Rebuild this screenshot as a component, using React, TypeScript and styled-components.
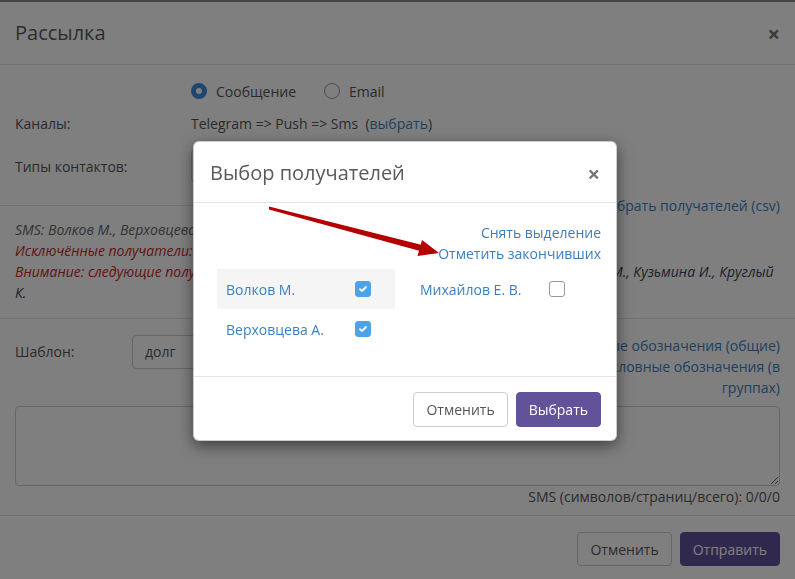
import React from "react";
import styled, { createGlobalStyle } from "styled-components";

const GlobalStyle = createGlobalStyle`
  html, body { margin: 0; padding: 0; }
  body {
    font-family: "Open Sans", "Liberation Sans", sans-serif;
    font-size: 14px;
    color: #555;
    background: #fff;
    overflow: hidden;
  }
  * { box-sizing: border-box; }
`;

const Page = styled.div`
  width: 795px;
  height: 579px;
  border-top: 2px solid #888;
  background: #fff;
  display: flex;
  flex-direction: column;
`;

const Header = styled.div`
  display: flex;
  align-items: center;
  justify-content: space-between;
  padding: 18px 15px;
  border-bottom: 1px solid #e5e5e5;
`;

const Title = styled.h4`
  margin: 0;
  font-weight: 400;
  font-size: 20px;
  line-height: 26px;
  color: #5a5a5a;
`;

const Close = styled.span`
  font-size: 22px;
  font-weight: 700;
  line-height: 1;
  color: #777;
`;

const Body = styled.div`
  display: flex;
  flex-direction: column;
  padding: 14px 15px 8px;
`;

const FormRow = styled.div<{ $h: number; $mt?: number }>`
  display: grid;
  grid-template-columns: 176px 1fr;
  align-items: center;
  height: ${(p) => p.$h}px;
  margin-top: ${(p) => p.$mt ?? 0}px;
`;

const Label = styled.span`
  color: #555;
`;

const Radios = styled.div`
  display: flex;
  align-items: center;
`;

const RadioOption = styled.label`
  display: inline-flex;
  align-items: center;
  gap: 9px;
  margin-right: 28px;
`;

const Radio = styled.span<{ $on?: boolean }>`
  width: 16px;
  height: 16px;
  border-radius: 50%;
  background: #fff;
  border: ${(p) => (p.$on ? "5px solid #3a8ee0" : "1px solid #999")};
`;

const Link = styled.a`
  color: #3a7ec0;
  text-decoration: none;
`;

const Input = styled.div<{ $w: number }>`
  width: ${(p) => p.$w}px;
  height: 34px;
  border: 1px solid #ccc;
  border-radius: 4px;
  background: #fff;
  padding: 6px 12px;
  line-height: 20px;
  color: #555;
`;

const CsvRow = styled.div`
  display: flex;
  align-items: center;
  height: 20px;
  margin: 12px 0 0 -15px;
  gap: 4px;
`;

const Rule = styled.div`
  flex: 1;
  height: 1px;
  background: #e5e5e5;
`;

const Notes = styled.div`
  margin-top: 4px;
  font-style: italic;
  line-height: 21px;
`;

const Note = styled.div<{ $tone: "muted" | "danger" }>`
  color: ${(p) => (p.$tone === "danger" ? "#c62828" : "#666")};
`;

const Names = styled.span`
  color: #3a3f55;
`;

const Divider = styled.div`
  height: 1px;
  background: #e5e5e5;
  margin: 15px -15px 0;
`;

const TemplateRow = styled.div`
  display: flex;
  align-items: flex-start;
  margin-top: 16px;
`;

const TemplateLabel = styled.span`
  width: 117px;
  line-height: 34px;
`;

const Legend = styled.div`
  margin-left: auto;
  width: 225px;
  text-align: right;
  line-height: 21px;
  display: flex;
  flex-direction: column;
`;

const TextArea = styled.textarea`
  display: block;
  width: 100%;
  height: 80px;
  margin-top: 8px;
  border: 1px solid #ccc;
  border-radius: 4px;
  resize: vertical;
  font: inherit;
`;

const Counter = styled.div`
  margin-top: 1px;
  line-height: 20px;
  text-align: right;
`;

const Footer = styled.div<{ $pad: string }>`
  display: flex;
  justify-content: flex-end;
  gap: 8px;
  padding: ${(p) => p.$pad};
  border-top: 1px solid #e5e5e5;
`;

const Button = styled.button<{ $primary?: boolean; $h: number }>`
  height: ${(p) => p.$h}px;
  padding: 0 12px;
  font: inherit;
  font-size: 14px;
  border-radius: 4px;
  border: 1px solid ${(p) => (p.$primary ? "#62529a" : "#ccc")};
  background: ${(p) => (p.$primary ? "#62529a" : "#fff")};
  color: ${(p) => (p.$primary ? "#fff" : "#555")};
`;

const Backdrop = styled.div`
  position: fixed;
  inset: 0;
  background: rgba(0, 0, 0, 0.5);
`;

const Dialog = styled.div`
  position: absolute;
  left: 193px;
  top: 141px;
  width: 424px;
  background: #fff;
  border: 1px solid rgba(0, 0, 0, 0.2);
  border-radius: 6px;
  box-shadow: 0 5px 15px rgba(0, 0, 0, 0.5);
`;

const DialogHeader = styled.div`
  display: flex;
  align-items: center;
  justify-content: space-between;
  padding: 17px 16px 16px;
  height: 61px;
  border-bottom: 1px solid #e5e5e5;
`;

const DialogBody = styled.div`
  padding: 19px 15px 27px;
`;

const Actions = styled.div`
  display: flex;
  flex-direction: column;
  align-items: flex-end;
  line-height: 21px;
`;

const Grid = styled.div`
  display: grid;
  grid-template-columns: 178px 178px;
  column-gap: 16px;
  margin: 5px 0 0 8px;
`;

const Cell = styled.div<{ $hover?: boolean }>`
  display: flex;
  align-items: center;
  height: 40px;
  padding-left: 9px;
  background: ${(p) => (p.$hover ? "#f5f5f5" : "transparent")};
`;

const Name = styled.span`
  width: 129px;
  color: #3c7fc0;
`;

const Check = styled.span<{ $on?: boolean }>`
  width: 16px;
  height: 16px;
  flex: none;
  border-radius: 3px;
  display: inline-flex;
  align-items: center;
  justify-content: center;
  background: ${(p) => (p.$on ? "#4da3e8" : "#fff")};
  border: 1px solid ${(p) => (p.$on ? "#4da3e8" : "#999")};
`;

const Arrow = styled.svg`
  position: absolute;
  left: 0;
  top: 0;
  pointer-events: none;
`;

function Box({ on }: { on?: boolean }) {
  return (
    <Check $on={on}>
      {on && (
        <svg width="12" height="12" viewBox="0 0 12 12">
          <path d="M3 6.2 L5 8 L9 4" fill="none" stroke="#fff" strokeWidth="1.8" strokeLinecap="round" strokeLinejoin="round" />
        </svg>
      )}
    </Check>
  );
}

const recipients = [
  { name: "Волков М.", on: true, hover: true },
  { name: "Михайлов Е. В.", on: false },
  { name: "Верховцева А.", on: true },
];

export default function App() {
  return (
    <>
      <GlobalStyle />
      <Page>
        <Header>
          <Title>Рассылка</Title>
          <Close>×</Close>
        </Header>
        <Body>
          <FormRow $h={24}>
            <span />
            <Radios>
              <RadioOption>
                <Radio $on />
                Сообщение
              </RadioOption>
              <RadioOption>
                <Radio />
                Email
              </RadioOption>
            </Radios>
          </FormRow>
          <FormRow $h={20} $mt={10}>
            <Label>Каналы:</Label>
            <span>
              Telegram =&gt; Push =&gt; Sms&nbsp; (<Link>выбрать</Link>)
            </span>
          </FormRow>
          <FormRow $h={34} $mt={16}>
            <Label>Типы контактов:</Label>
            <Input $w={420} />
          </FormRow>
          <CsvRow>
            <Rule />
            <Link>Загрузить/выбрать получателей (csv)</Link>
          </CsvRow>
          <Notes>
            <Note $tone="muted">SMS: Волков М., Верховцева А., Михайлов Е. В.</Note>
            <Note $tone="danger">Исключённые получатели: нет</Note>
            <Note $tone="danger">
              Внимание: следующие получатели не имеют контактов: <Names>Иванов П., Петров С., Сидоров М., Кузьмина И., Круглый</Names>
              <br />
              <Names>К.</Names>
            </Note>
          </Notes>
          <Divider />
          <TemplateRow>
            <TemplateLabel>Шаблон:</TemplateLabel>
            <Input $w={300}>долг</Input>
            <Legend>
              <Link>Условные обозначения (общие)</Link>
              <Link>Условные обозначения (в группах)</Link>
            </Legend>
          </TemplateRow>
          <TextArea />
          <Counter>SMS (символов/страниц/всего): 0/0/0</Counter>
        </Body>
        <Footer $pad="16px 15px">
          <Button $h={34}>Отменить</Button>
          <Button $h={34} $primary>
            Отправить
          </Button>
        </Footer>
      </Page>
      <Backdrop />
      <Dialog>
        <DialogHeader>
          <Title>Выбор получателей</Title>
          <Close>×</Close>
        </DialogHeader>
        <DialogBody>
          <Actions>
            <Link>Снять выделение</Link>
            <Link>Отметить закончивших</Link>
          </Actions>
          <Grid>
            {recipients.map((r) => (
              <Cell key={r.name} $hover={r.hover}>
                <Name>{r.name}</Name>
                <Box on={r.on} />
              </Cell>
            ))}
          </Grid>
        </DialogBody>
        <Footer $pad="15px 15px 13px">
          <Button $h={35}>Отменить</Button>
          <Button $h={35} $primary>
            Выбрать
          </Button>
        </Footer>
        <Arrow width="424" height="300" viewBox="0 0 424 300">
          <polygon points="75,64.5 228,103 226,109 75,67.5" fill="#b30000" />
          <polygon points="245,111 223.5,114 228,98" fill="#b30000" />
        </Arrow>
      </Dialog>
    </>
  );
}
